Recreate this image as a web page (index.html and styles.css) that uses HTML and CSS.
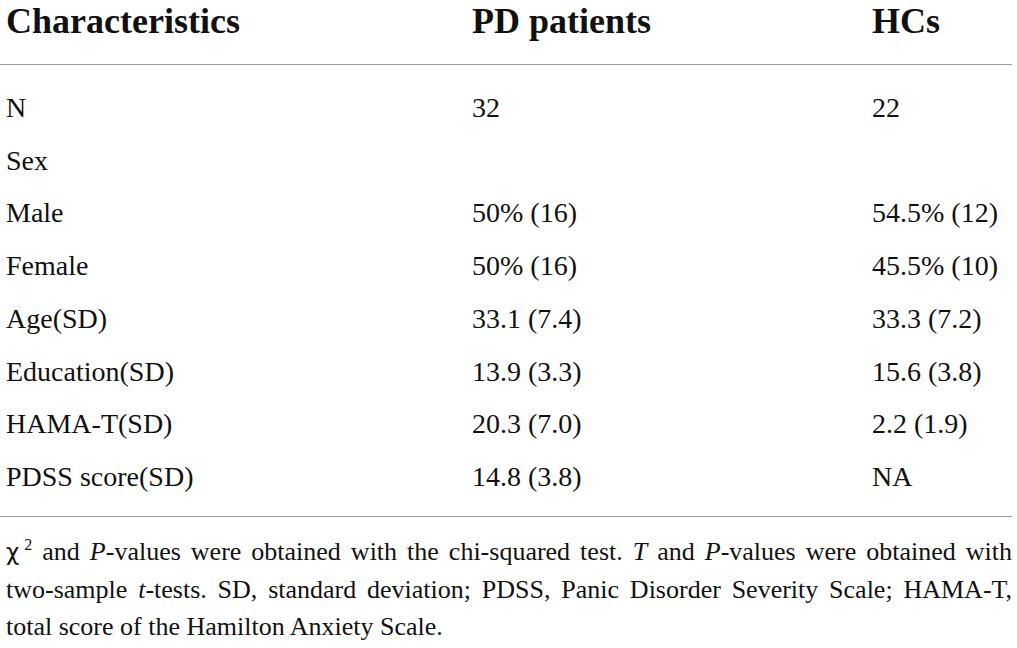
FILE: index.html
```html
<!DOCTYPE html>
<html lang="en">
  <head>
    <meta charset="UTF-8" />
    <meta name="viewport" content="width=device-width, initial-scale=1.0" />
    <title>Demographic characteristics</title>
    <link rel="stylesheet" href="styles.css">
  </head>
  <body>
    <div class="table">
      <div class="row head">
        <span>Characteristics</span>
        <span>PD patients</span>
        <span>HCs</span>
      </div>
      <div class="rule"></div>

      <div class="body">
        <div class="row"><span>N</span><span>32</span><span>22</span></div>
        <div class="row"><span>Sex</span><span></span><span></span></div>
        <div class="row"><span>Male</span><span>50% (16)</span><span>54.5% (12)</span></div>
        <div class="row"><span>Female</span><span>50% (16)</span><span>45.5% (10)</span></div>
        <div class="row"><span>Age(SD)</span><span>33.1 (7.4)</span><span>33.3 (7.2)</span></div>
        <div class="row"><span>Education(SD)</span><span>13.9 (3.3)</span><span>15.6 (3.8)</span></div>
        <div class="row"><span>HAMA-T(SD)</span><span>20.3 (7.0)</span><span>2.2 (1.9)</span></div>
        <div class="row"><span>PDSS score(SD)</span><span>14.8 (3.8)</span><span>NA</span></div>
      </div>
      <div class="rule"></div>

      <p class="note">
        <span class="chi">χ</span><sup>2</sup> and <i>P</i>-values were obtained with the
        chi-squared test. <i>T</i> and <i>P</i>-values were obtained with
        <span class="nw">two-sample</span> <span class="nw"><i>t</i>-tests.</span>
        SD, standard deviation; PDSS, Panic Disorder Severity Scale;
        <span class="nw">HAMA-T,</span> total score of the Hamilton Anxiety Scale.
      </p>
    </div>
  </body>
</html>
```

FILE: styles.css
```css
body {
  margin: 0;
  background: #fff;
  color: #111;
  font-family: "Liberation Serif", "Times New Roman", serif;
}
.table {
  width: 1012px;
}
.row {
  display: grid;
  grid-template-columns: 466px 400px 1fr;
  padding-left: 6px;
}
.head {
  font-size: 36px;
  font-weight: bold;
  line-height: 40px;
  padding-top: 1px;
  padding-bottom: 23px;
}
.rule {
  height: 1px;
  background: #999;
}
.body {
  padding-top: 17px;
  padding-bottom: 12px;
}
.body .row {
  font-size: 28px;
  line-height: 52.7px;
}
.note {
  margin: 16px 0 0;
  padding-left: 6px;
  font-size: 26px;
  line-height: 37px;
  text-align: justify;
}
.nw {
  white-space: nowrap;
}
.chi {
  font-family: "DejaVu Sans", sans-serif;
  font-size: 23px;
}
.note sup {
  font-size: 16px;
  margin-left: 5px;
  line-height: 0;
}
```
